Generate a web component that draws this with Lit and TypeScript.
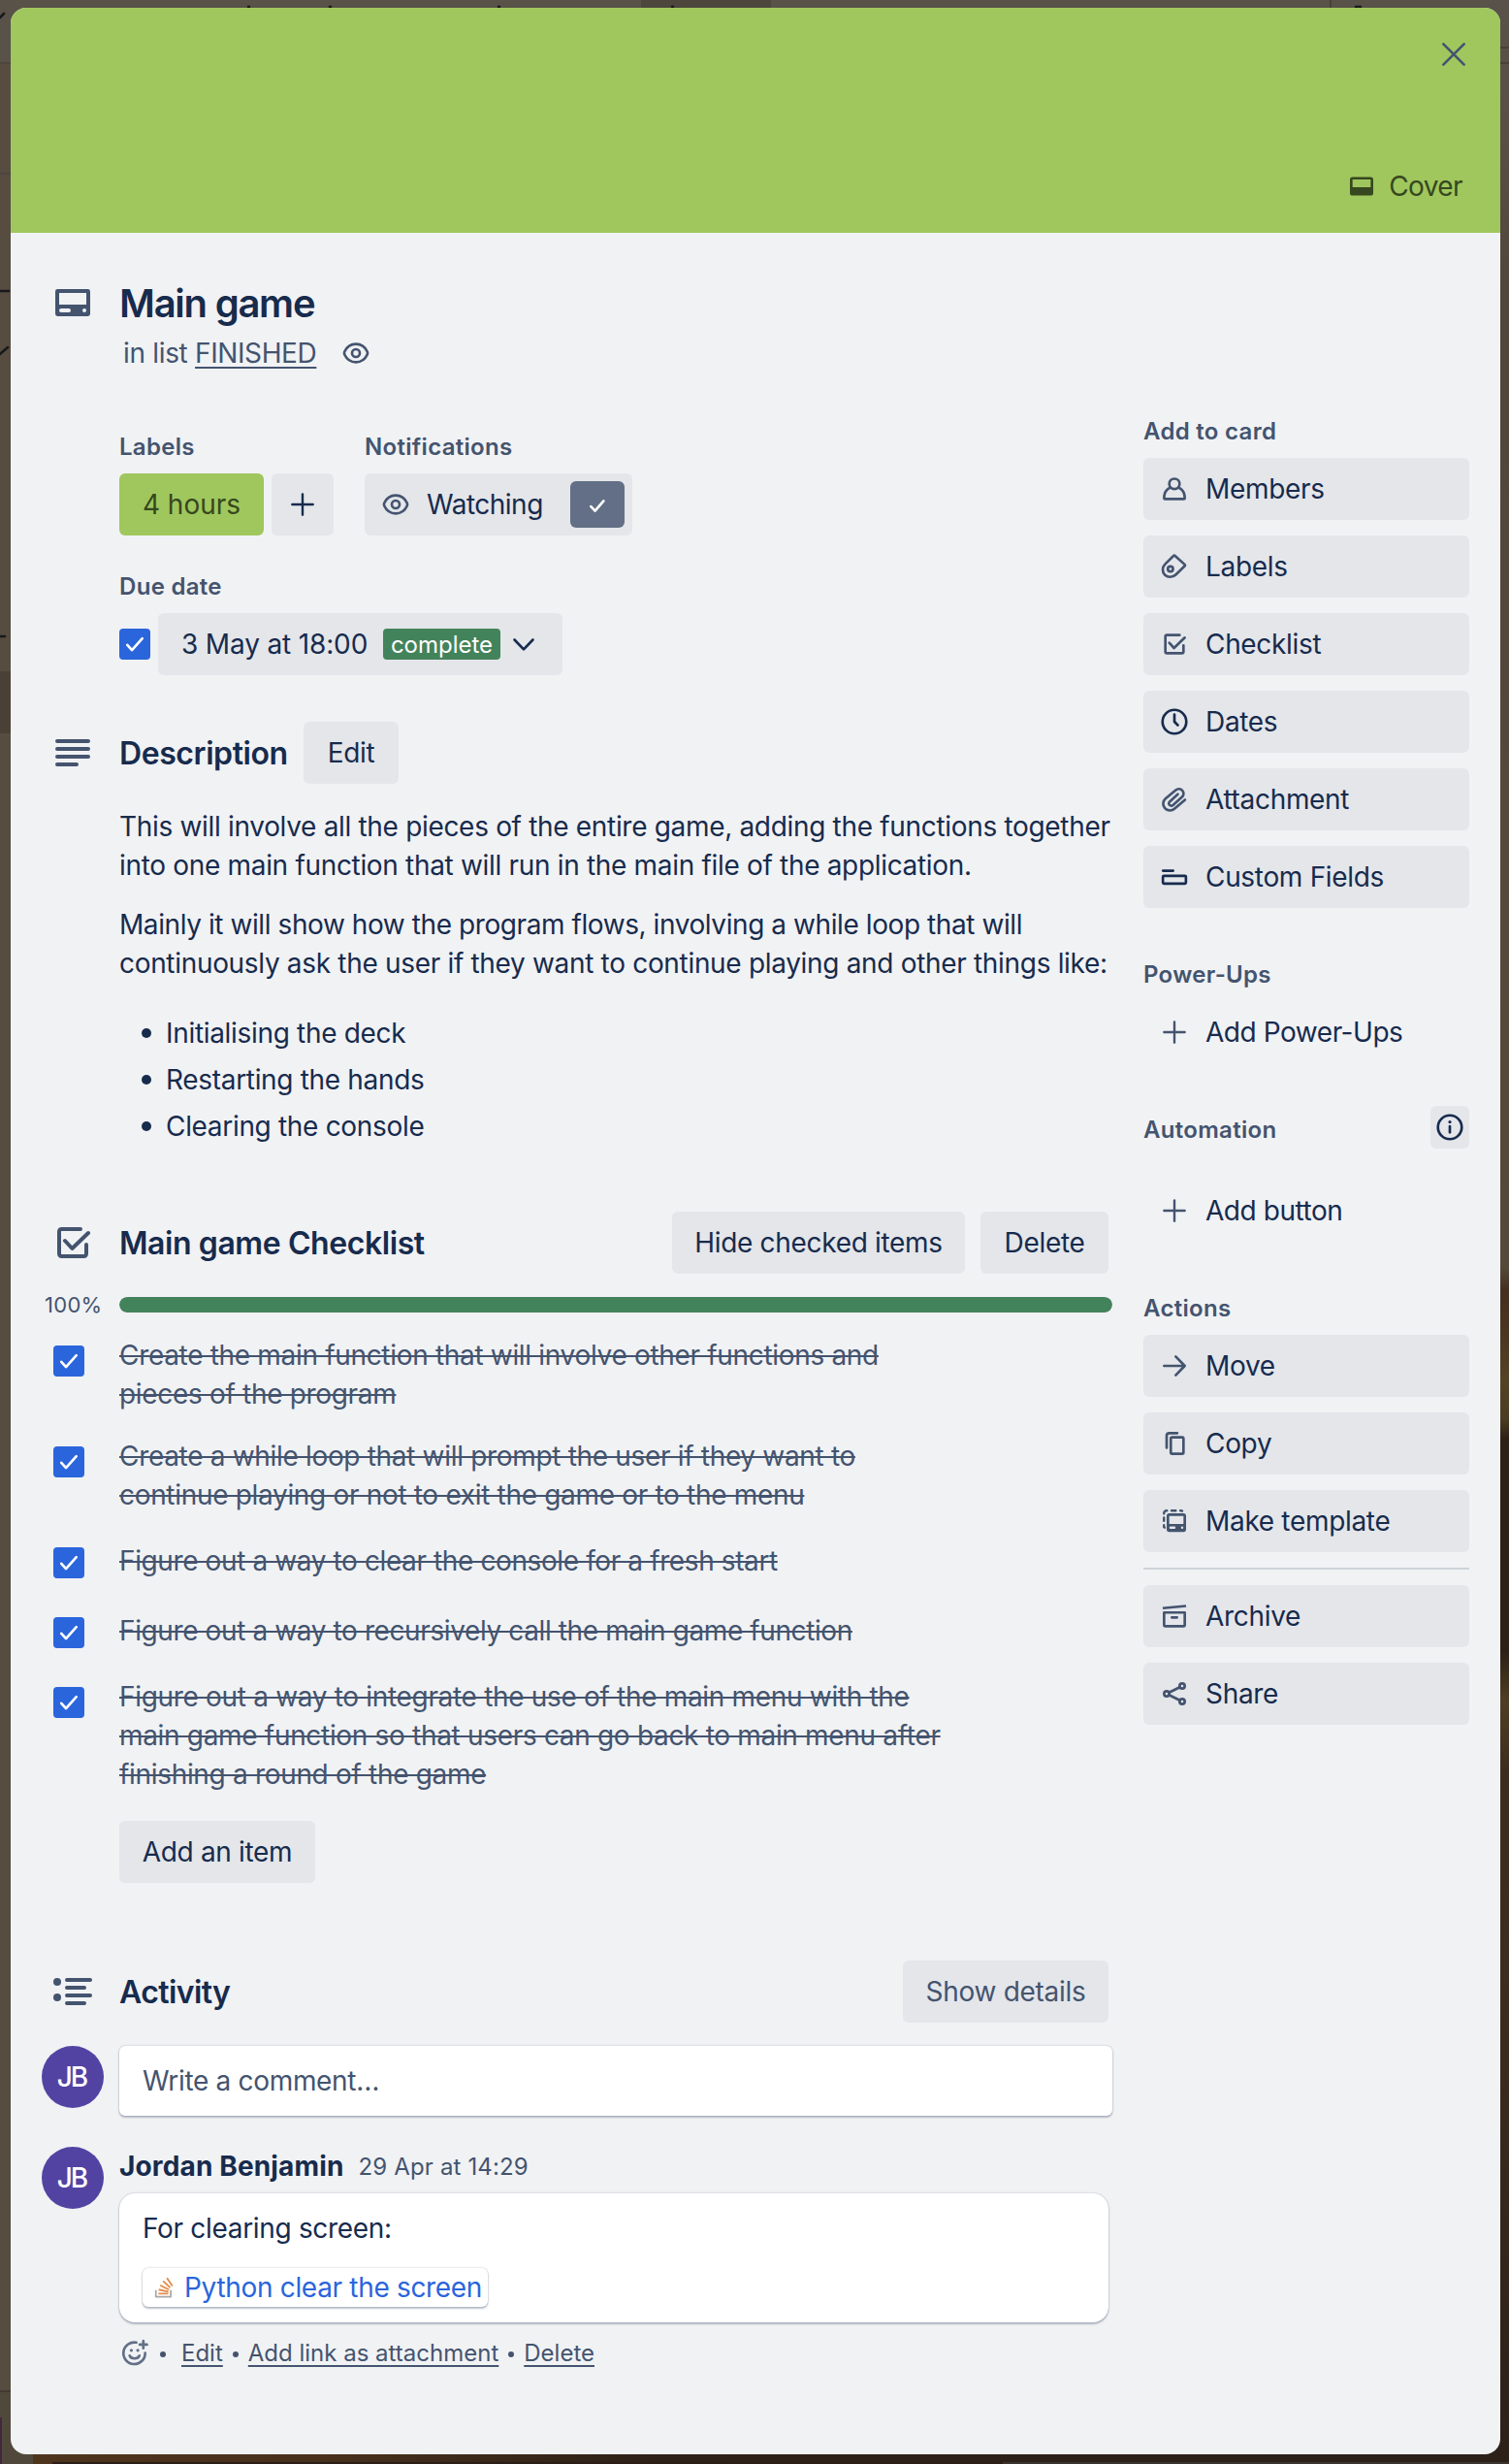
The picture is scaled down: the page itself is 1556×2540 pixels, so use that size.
import { LitElement, html, svg, css, type TemplateResult } from "lit";
import { customElement, property } from "lit/decorators.js";

const CARD_LARGE = svg`
  <path fill="currentColor" stroke="none" fill-rule="evenodd" d="M4.2 5H19.8A1.2 1.2 0 0 1 21 6.2V17.8A1.2 1.2 0 0 1 19.8 19H4.2A1.2 1.2 0 0 1 3 17.8V6.2A1.2 1.2 0 0 1 4.2 5ZM5 7V13H19V7ZM6 15A1 1 0 0 0 6 17H10A1 1 0 0 0 10 15ZM18 15A1 1 0 0 0 18 17A1 1 0 0 0 18 15Z"/>`;

const ICONS: Record<string, TemplateResult<2>> = {
  card: CARD_LARGE,
  cover: svg`<path fill="currentColor" stroke="none" fill-rule="evenodd" d="M5 4.8H19A2 2 0 0 1 21 6.8V17.2A2 2 0 0 1 19 19.2H5A2 2 0 0 1 3 17.2V6.8A2 2 0 0 1 5 4.8ZM5 6.8V12.8H19V6.8Z"/>`,
  close: svg`<path d="M4 4L20 20M20 4L4 20"/>`,
  eye: svg`<path d="M3.2 10.9C4.9 7.3 8.2 5 12 5S19.1 7.3 20.8 10.9Q21.3 12 20.8 13.1C19.1 16.7 15.8 19 12 19S4.9 16.7 3.2 13.1Q2.7 12 3.2 10.9Z"/><circle cx="12" cy="12" r="3"/>`,
  plus: svg`<path stroke-width="1.8" d="M12 4V20M4 12H20"/>`,
  check: svg`<path d="M6.2 12.6L9.8 16.6L17.8 7.6"/>`,
  watched: svg`<path d="M7 12.8L10.2 16.2L16.8 8.6"/>`,
  chevron: svg`<path d="M4.9 8.6L12 16L19.1 8.6"/>`,
  description: svg`<path d="M4 6H20M4 10H20M4 14H20M4 18H14"/>`,
  checklist: svg`<path d="M16 5H6.2A1.2 1.2 0 0 0 5 6.2V17.8A1.2 1.2 0 0 0 6.2 19H17.8A1.2 1.2 0 0 0 19 17.8V13"/><path d="M8 11L11.7 15L20 7"/>`,
  activity: svg`<path d="M9 6H21M9 10H18M9 14H21M9 18H18"/><circle cx="4" cy="7" r="2" fill="currentColor" stroke="none"/><circle cx="4" cy="15" r="2" fill="currentColor" stroke="none"/>`,
  member: svg`<circle cx="12" cy="8.1" r="4"/><path d="M9 10.9C6 12.2 4 15.2 4 18.9A.9 .9 0 0 0 4.9 19.8H19.1A.9 .9 0 0 0 20 18.9C20 15.2 18 12.2 15 10.9"/>`,
  label: svg`<path d="M11.1 3.9L4.9 10C2.4 12.5 2.4 16.3 4.7 18.5C7 20.7 10.7 20.6 13.2 18.2L19.9 11.6Q20.5 11 19.9 10.4L12.7 3.9Q11.9 3.2 11.1 3.9Z"/><circle cx="8.9" cy="13.9" r="2"/>`,
  clock: svg`<circle cx="12" cy="12" r="9.2"/><path d="M12 6.4V12L14.6 14.6"/>`,
  attachment: svg`<path d="M20.2 12.4L12 19.3A5.2 5.2 0 0 1 5.1 11.4L13 4.9A3.55 3.55 0 0 1 17.9 10.2L10.9 16.5A1.85 1.85 0 0 1 8.3 13.8L14.6 8"/>`,
  fields: svg`<path d="M3.2 7.2H11"/><rect x="3.1" y="11.2" width="17.8" height="6" rx=".8"/>`,
  arrow: svg`<path d="M4 12H20M13 4.8L20 12L13 19.2"/>`,
  copy: svg`<path d="M6 15.4V6A2 2 0 0 1 8 4H14.2"/><rect x="9.2" y="7.2" width="9.8" height="12.8" rx="1"/>`,
  template: svg`<path fill="currentColor" stroke="none" fill-rule="evenodd" d="M8 6H19A2 2 0 0 1 21 8V18.4A2 2 0 0 1 19 20.4H8A2 2 0 0 1 6 18.4V8A2 2 0 0 1 8 6ZM8 8V14.2H19V8ZM9 16.2A.9 .9 0 0 0 9 18H12A.9 .9 0 0 0 12 16.2ZM18 16.2A.9 .9 0 0 0 18 18A.9 .9 0 0 0 18 16.2Z"/><path stroke-width="1.8" d="M3.9 6.2V5.9A2 2 0 0 1 5.9 3.9H6.2M9.8 3.9H13M16.6 3.9H17.4L18 4.2M3.9 9.4V11.8M3.9 15.2V16.6L4.4 17"/>`,
  archive: svg`<path stroke-linecap="butt" d="M3 5.8L21 4.1"/><path d="M4 9.2H20V18.8A1 1 0 0 1 19 19.8H5A1 1 0 0 1 4 18.8Z"/><path d="M10 13H14"/>`,
  share: svg`<circle cx="6" cy="12" r="2"/><circle cx="18" cy="6" r="2"/><circle cx="18" cy="18" r="2"/><path d="M7.8 11.1L16.2 6.9M7.8 12.9L16.2 17.1"/>`,
  info: svg`<circle cx="12" cy="12" r="9.2"/><path d="M12 11.3V16"/><circle cx="12" cy="7.9" r="1.2" fill="currentColor" stroke="none"/>`,
  smile: svg`<path stroke-width="2" d="M13.2 3.6A8.4 8.4 0 1 0 20 11.6"/><circle cx="9.3" cy="9.6" r="1.2" fill="currentColor" stroke="none"/><circle cx="14.3" cy="9.6" r="1.2" fill="currentColor" stroke="none"/><path d="M8 13.7C9.2 16.7 14.4 16.7 15.6 13.7M18.6 2.4V8M15.8 5.2H21.4"/>`,
  stack: svg`<g stroke="#a8a8a8" stroke-width="2" stroke-linecap="butt"><path d="M2 14.5V22.4H19.5V14.5"/></g><g stroke="#e58a48" stroke-width="2.1" stroke-linecap="butt"><path d="M5 18.8H16.6M5.3 14L16.7 16.5M7 8.8L17.3 14M10.4 3.9L18.8 11.6M15 .2L21.4 9.6"/></g>`,
};

@customElement("ui-icon")
export class UiIcon extends LitElement {
  @property() name = "plus";
  @property({ type: Number }) size = 32;

  static styles = css`
    :host { display: inline-flex; flex: none; color: #44546f; }
    svg {
      display: block; fill: none; stroke: currentColor; stroke-width: 2;
      stroke-linecap: round; stroke-linejoin: round; overflow: visible;
    }
  `;

  render() {
    return html`<svg width=${this.size} height=${this.size} viewBox="0 0 24 24" aria-hidden="true">${ICONS[this.name]}</svg>`;
  }
}

const ADD_TO_CARD = [
  { icon: "member", text: "Members" },
  { icon: "label", text: "Labels" },
  { icon: "checklist", text: "Checklist" },
  { icon: "clock", text: "Dates", dark: true },
  { icon: "attachment", text: "Attachment" },
  { icon: "fields", text: "Custom Fields", dark: true },
];

const ACTIONS = [
  { icon: "arrow", text: "Move" },
  { icon: "copy", text: "Copy" },
  { icon: "template", text: "Make template" },
];

const CLOSING_ACTIONS = [
  { icon: "archive", text: "Archive" },
  { icon: "share", text: "Share" },
];

const ITEMS: string[][] = [
  ["Create the main function that will involve other functions and", "pieces of the program"],
  ["Create a while loop that will prompt the user if they want to", "continue playing or not to exit the game or to the menu"],
  ["Figure out a way to clear the console for a fresh start"],
  ["Figure out a way to recursively call the main game function"],
  ["Figure out a way to integrate the use of the main menu with the", "main game function so that users can go back to main menu after", "finishing a round of the game"],
];

type SideItem = { icon: string; text: string; dark?: boolean };

@customElement("app-root")
export class AppRoot extends LitElement {
  static styles = css`
    :host {
      display: block; position: relative; width: 1556px; height: 2540px; overflow: hidden;
      background: #574c40; color: #172b4d;
      font: 400 28px/40px Inter, "Liberation Sans", sans-serif; letter-spacing: -0.32px;
    }
    * { box-sizing: border-box; }
    h1, h2, h3, p, ul { margin: 0; padding: 0; }
    .board { position: absolute; inset: 0; display: block; }
    .page { position: relative; padding: 8px 9px 10px 11px; height: 2540px; }
    .modal {
      height: 2522px; border-radius: 16px; background: #f1f2f4; overflow: hidden;
    }
    .cover {
      height: 232px; background: #9fc75d; display: flex; flex-direction: column;
      align-items: flex-end; justify-content: space-between; padding: 32px 32px 16px;
    }
    .cover-button {
      display: flex; align-items: center; gap: 12px; height: 64px; color: #37471f;
      padding-right: 7px; letter-spacing: -0.6px;
    }
    .cover-button ui-icon { color: #37471f; }

    .header { display: flex; padding: 48px 0 0 32px; }
    .gutter { flex: none; width: 80px; display: flex; justify-content: center; padding-right: 16px; }
    h1 { font-size: 40px; line-height: 50px; height: 48px; font-weight: 600; letter-spacing: -1.25px; }
    .in-list {
      margin: 8px 0 0 4px; color: #44546f; display: flex; align-items: center; white-space: pre;
    }
    .in-list a { text-decoration: underline; text-underline-offset: 4px; text-decoration-thickness: 2px; letter-spacing: -0.4px; }
    .in-list ui-icon { margin-left: 25px; }

    .body { display: flex; gap: 32px; padding: 0 32px; }
    .main { width: 1104px; padding-top: 56px; flex: none; }
    .side { width: 336px; padding-top: 40px; flex: none; }

    h3 {
      font-size: 24px; line-height: 41px; height: 40px; font-weight: 600; color: #44546f; letter-spacing: 0.3px;
      margin-bottom: 8px;
    }
    .details { padding-left: 80px; display: flex; flex-direction: column; gap: 32px; }
    .groups { display: flex; gap: 32px; }
    .row { display: flex; align-items: center; gap: 8px; }
    .button {
      display: flex; align-items: center; justify-content: center; height: 64px; border-radius: 6px;
      background: #e4e6ea; flex: none; white-space: nowrap;
    }
    .chip { width: 149px; background: #9fc75d; color: #37471f; letter-spacing: 0; }
    .add { width: 64px; }
    .add ui-icon { color: #172b4d; }
    .watch { width: 276px; justify-content: flex-start; padding-left: 16px; }
    .watch span { margin-left: 16px; width: 132px; letter-spacing: -0.5px; }
    .watched {
      width: 56px; height: 48px; margin-left: 16px; border-radius: 6px; background: #626f86;
      display: flex; align-items: center; justify-content: center; padding-top: 1px;
    }
    .watched ui-icon, .box ui-icon { color: #fff; }
    .box {
      width: 32px; height: 32px; border-radius: 4px; background: #2a65dc; flex: none; display: flex;
      align-items: center; justify-content: center;
    }
    .due { width: 417px; justify-content: flex-start; padding-left: 24px; }
    .due-text { width: 208px; letter-spacing: -0.15px; }
    .badge {
      width: 121px; height: 32px; border-radius: 4px; background: #43835c; color: #fff;
      font-size: 24px; line-height: 33px; text-align: center; letter-spacing: 0;
    }
    .due ui-icon { color: #172b4d; margin-left: 8px; }

    .heading { display: flex; align-items: center; height: 64px; }
    h2 { font-size: 32px; line-height: 42px; height: 40px; font-weight: 600; letter-spacing: -0.42px; flex: 1; }
    .desc-heading { margin-top: 48px; }
    .desc-heading h2 { flex: none; width: 190px; }
    .edit { width: 98px; }
    .description { padding: 24px 0 0 80px; white-space: nowrap; }
    .description p + p { margin-top: 21px; }
    .tight { letter-spacing: -0.42px; }
    .description ul { margin-top: 28px; list-style: none; }
    .description li { display: flex; align-items: center; gap: 15px; padding-left: 23px; line-height: 48px; }
    .description li::before { content: ""; width: 10px; height: 10px; border-radius: 50%; background: currentColor; }

    .check-heading { margin-top: 64px; gap: 16px; padding-right: 4px; }
    .check-heading .gutter { margin-right: -16px; }
    .hide { width: 302px; }
    .delete { width: 132px; }
    .progress { display: flex; align-items: center; height: 16px; margin-top: 24px; }
    .percent {
      width: 80px; flex: none; font-size: 22px; color: #44546f; letter-spacing: 0.3px; line-height: 16px;
      padding-left: 3px;
    }
    .track { width: 1024px; height: 16px; border-radius: 8px; background: #dcdfe4; overflow: hidden; }
    .bar { height: 100%; background: #43835c; border-radius: 8px; }
    .items { padding-top: 12px; }
    .item { display: flex; align-items: flex-start; padding: 12px 0; min-height: 72px; }
    .item.single { padding: 16px 0; letter-spacing: -0.39px; }
    .item .box { margin: 10px 36px 0 12px; }
    .item.single .box { margin-top: 6px; }
    .item-text { color: #44546f; text-decoration: line-through; text-decoration-thickness: 2px; white-space: nowrap; }
    .add-item { width: 202px; margin: 16px 0 0 80px; }

    .activity-heading { margin-top: 80px; padding-right: 4px; }
    .activity-heading h2 { letter-spacing: -0.6px; }
    .show { width: 212px; color: #44546f; letter-spacing: -0.3px; }
    .entry { display: flex; margin-top: 24px; }
    .avatar {
      width: 64px; height: 64px; border-radius: 50%; background: #5243a3; color: #fff; flex: none;
      margin-right: 16px; display: flex; align-items: center; justify-content: center;
      font-size: 28px; font-weight: 500; letter-spacing: -2px; padding-right: 2px;
    }
    .input, .comment, .link {
      background: #fff; box-shadow: 0 2px 2px #091e4240, 0 0 2px #091e424f;
    }
    .input {
      width: 1024px; height: 72px; border-radius: 6px; padding: 16px 24px; color: #44546f;
    }
    .second { margin-top: 32px; }
    .thread { width: 1020px; }
    .who { display: flex; align-items: center; gap: 15px; height: 40px; }
    .who b { font-weight: 700; letter-spacing: 0.15px; }
    .who span { font-size: 24px; color: #44546f; letter-spacing: 0.15px; padding-top: 2px; }
    .comment { margin-top: 8px; height: 133px; border-radius: 16px; padding: 16px 24px; }
    .link {
      display: flex; align-items: center; width: 356px; height: 40px; margin-top: 21px;
      border-radius: 6px; color: #2a65dc; padding-left: 12px; gap: 10px; white-space: nowrap;
    }
    .meta {
      display: flex; align-items: center; margin-top: 16px; height: 32px; font-size: 24px;
      line-height: 32px; color: #44546f; letter-spacing: 0; white-space: nowrap;
    }
    .meta ui-icon { color: #626f86; }
    .meta a { text-decoration: underline; text-underline-offset: 4px; text-decoration-thickness: 2px; }
    .dot { width: 6px; height: 6px; border-radius: 50%; background: #44546f; flex: none; margin: 2px 10px 0; }
    .dot.first { margin: 2px 16px 0 10px; }

    .side-list { display: flex; flex-direction: column; gap: 16px; }
    .side-button { justify-content: flex-start; padding-left: 16px; gap: 16px; }
    .plain { background: none; letter-spacing: -0.45px; }
    .side-button ui-icon.dark { color: #172b4d; }
    .side h3:not(:first-child), .automation { margin-top: 48px; }
    .automation { display: flex; justify-content: space-between; height: 40px; margin-bottom: 32px; }
    .automation h3 { margin: 0; }
    .info {
      width: 40px; height: 44px; margin-top: -4px; border-radius: 6px; background: #e4e6ea;
      display: flex; align-items: center; justify-content: center;
    }
    .info ui-icon { color: #172b4d; }
    hr { border: 0; height: 2px; background: #cfd3d9; margin: 16px 0; }
  `;

  private sideButton(item: SideItem, plain = false) {
    return html`<div class="button side-button ${plain ? "plain" : ""}">
      <ui-icon class=${item.dark ? "dark" : ""} name=${item.icon}></ui-icon><span>${item.text}</span>
    </div>`;
  }

  private checkbox() {
    return html`<div class="box"><ui-icon name="check" size="32"></ui-icon></div>`;
  }

  private board() {
    return html`<svg class="board" width="1556" height="2540" aria-hidden="true">
      <defs>
        <linearGradient id="right" x1="0" y1="0" x2="0" y2="1">
          <stop offset="0" stop-color="#59524a"/><stop offset=".05" stop-color="#594f45"/>
          <stop offset=".12" stop-color="#51463b"/><stop offset=".5" stop-color="#554a39"/>
          <stop offset=".514" stop-color="#554a39"/><stop offset=".524" stop-color="#442f20"/>
          <stop offset=".54" stop-color="#4a3621"/><stop offset=".56" stop-color="#544325"/>
          <stop offset=".576" stop-color="#4b3d22"/><stop offset=".584" stop-color="#2c2017"/>
          <stop offset=".67" stop-color="#2c2017"/><stop offset=".69" stop-color="#4f3e24"/>
          <stop offset=".72" stop-color="#3c2c1e"/><stop offset=".8" stop-color="#3d2d1e"/>
          <stop offset="1" stop-color="#2c2019"/>
        </linearGradient>
        <linearGradient id="bottom" x1="0" y1="0" x2="1" y2="0">
          <stop offset="0" stop-color="#50351d"/><stop offset=".2" stop-color="#48301c"/>
          <stop offset=".42" stop-color="#2e2118"/><stop offset="1" stop-color="#2c2019"/>
        </linearGradient>
      </defs>
      <rect width="1556" height="64" fill="#585248"/>
      <rect x="661" width="134" height="8" fill="#4c463c"/>
      <rect x="1371" width="2" height="8" fill="#484139"/>
      <rect y="64" width="20" height="2" fill="#4d453e"/>
      <rect y="178" width="20" height="2" fill="#4d453e"/>
      <rect y="692" width="20" height="64" fill="#4a4136"/>
      <rect x="1536" width="20" height="2540" fill="url(#right)"/>
      <rect x="1536" y="48" width="20" height="2" fill="#484039"/>
      <rect x="1536" y="64" width="20" height="2" fill="#484039"/>
      <rect y="2464" width="11" height="2" fill="#423a31"/>
      <rect y="2466" width="34" height="74" fill="#50493b"/>
      <rect y="2492" width="2" height="48" fill="#43273f"/>
      <rect x="34" y="2520" width="1522" height="20" fill="url(#bottom)"/>
      <rect x="54" y="2538" width="980" height="2" fill="#2a1e17"/>
      <rect x="1034" y="2538" width="522" height="2" fill="#3b332f"/>
      <g stroke="#17191d" stroke-width="2.5" fill="none" stroke-linecap="round">
        <path d="M0 18L4 14M0 300H9M0 365L8 358M0 656H5M256 7h1M340 7h1M514 7h1M693 7h1M1398 7h5"/>
      </g>
    </svg>`;
  }

  render() {
    return html`
      ${this.board()}
      <div class="page"><div class="modal">
        <div class="cover">
          <ui-icon name="close"></ui-icon>
          <div class="cover-button"><ui-icon name="cover"></ui-icon><span>Cover</span></div>
        </div>
        <div class="header">
          <div class="gutter"><ui-icon name="card" size="48"></ui-icon></div>
          <div>
            <h1>Main game</h1>
            <div class="in-list">in list <a>FINISHED</a><ui-icon name="eye"></ui-icon></div>
          </div>
        </div>
        <div class="body">
          <div class="main">
            <div class="details">
              <div class="groups">
                <div><h3>Labels</h3>
                  <div class="row">
                    <div class="button chip">4 hours</div>
                    <div class="button add"><ui-icon name="plus"></ui-icon></div>
                  </div>
                </div>
                <div><h3>Notifications</h3>
                  <div class="button watch">
                    <ui-icon name="eye"></ui-icon><span>Watching</span>
                    <div class="watched"><ui-icon name="watched" size="32"></ui-icon></div>
                  </div>
                </div>
              </div>
              <div><h3>Due date</h3>
                <div class="row">
                  ${this.checkbox()}
                  <div class="button due">
                    <span class="due-text">3 May at 18:00</span><span class="badge">complete</span><ui-icon name="chevron"></ui-icon>
                  </div>
                </div>
              </div>
            </div>

            <div class="heading desc-heading">
              <div class="gutter"><ui-icon name="description" size="48"></ui-icon></div>
              <h2>Description</h2><div class="button edit">Edit</div>
            </div>
            <div class="description">
              <p>This will involve all the pieces of the entire game, adding the functions together<br>into one main function that will run in the main file of the application.</p>
              <p><span class="tight">Mainly it will show how the program flows, involving a while loop that will</span><br>continuously ask the user if they want to continue playing and other things like:</p>
              <ul>
                <li>Initialising the deck</li>
                <li>Restarting the hands</li>
                <li>Clearing the console</li>
              </ul>
            </div>

            <div class="heading check-heading">
              <div class="gutter"><ui-icon name="checklist" size="48"></ui-icon></div>
              <h2>Main game Checklist</h2>
              <div class="button hide">Hide checked items</div>
              <div class="button delete">Delete</div>
            </div>
            <div class="progress">
              <div class="percent">100%</div>
              <div class="track"><div class="bar" style="width:100%"></div></div>
            </div>
            <div class="items">
              ${ITEMS.map((lines) => html`<div class="item ${lines.length === 1 ? "single" : ""}">
                ${this.checkbox()}
                <div class="item-text">${lines.map((line, i) => html`${i ? html`<br>` : ""}${line}`)}</div>
              </div>`)}
            </div>
            <div class="button add-item">Add an item</div>

            <div class="heading activity-heading">
              <div class="gutter"><ui-icon name="activity" size="48"></ui-icon></div>
              <h2>Activity</h2><div class="button show">Show details</div>
            </div>
            <div class="entry">
              <div class="avatar">JB</div>
              <div class="input">Write a comment…</div>
            </div>
            <div class="entry second">
              <div class="avatar">JB</div>
              <div class="thread">
                <div class="who"><b>Jordan Benjamin</b><span>29 Apr at 14:29</span></div>
                <div class="comment">
                  For clearing screen:
                  <div class="link"><ui-icon name="stack" size="21"></ui-icon><span>Python clear the screen</span></div>
                </div>
                <div class="meta">
                  <ui-icon name="smile"></ui-icon><span class="dot first"></span>
                  <a>Edit</a><span class="dot"></span><a>Add link as attachment</a><span class="dot"></span><a>Delete</a>
                </div>
              </div>
            </div>
          </div>

          <div class="side">
            <h3>Add to card</h3>
            <div class="side-list">${ADD_TO_CARD.map((i) => this.sideButton(i))}</div>
            <h3>Power-Ups</h3>
            ${this.sideButton({ icon: "plus", text: "Add Power-Ups" }, true)}
            <div class="automation">
              <h3>Automation</h3>
              <div class="info"><ui-icon name="info"></ui-icon></div>
            </div>
            ${this.sideButton({ icon: "plus", text: "Add button" }, true)}
            <h3>Actions</h3>
            <div class="side-list">${ACTIONS.map((i) => this.sideButton(i))}</div>
            <hr>
            <div class="side-list">${CLOSING_ACTIONS.map((i) => this.sideButton(i))}</div>
          </div>
        </div>
      </div></div>
    `;
  }
}
